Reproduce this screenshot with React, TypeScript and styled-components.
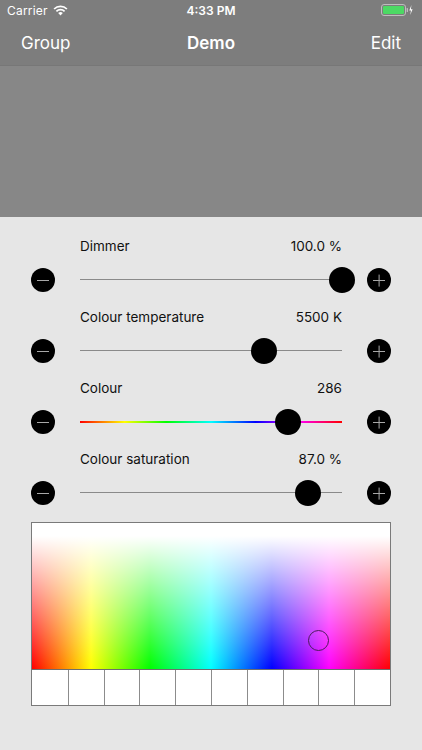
import React from "react";
import styled, { createGlobalStyle } from "styled-components";

const GlobalStyle = createGlobalStyle`
  html, body {
    margin: 0;
    padding: 0;
    background: #e6e6e6;
  }
  body {
    font-family: Inter, "Liberation Sans", Arial, sans-serif;
    -webkit-font-smoothing: antialiased;
  }
`;

const Screen = styled.div`
  width: 422px;
  min-height: 750px;
  display: flex;
  flex-direction: column;
  background: #e6e6e6;
`;

const TopBar = styled.div`
  background: #7d7d7d;
  color: #fff;
  border-bottom: 1px solid #777;
`;

const StatusBar = styled.div`
  height: 20px;
  display: grid;
  grid-template-columns: 1fr auto 1fr;
  align-items: center;
  padding: 0 7px;
  font-size: 12px;
`;

const StatusLeft = styled.div`
  display: flex;
  align-items: center;
  gap: 5px;
  letter-spacing: 0.2px;
`;

const Clock = styled.div`
  font-weight: 600;
`;

const StatusRight = styled.div`
  display: flex;
  justify-content: flex-end;
  align-items: center;
  gap: 2px;
  padding-right: 2px;
`;

const NavBar = styled.div`
  height: 44px;
  display: grid;
  grid-template-columns: 1fr auto 1fr;
  align-items: center;
  padding: 1px 21px 0;
  font-size: 17px;
`;

const NavButton = styled.div<{ $right?: boolean }>`
  text-align: ${(p) => (p.$right ? "right" : "left")};
`;

const NavTitle = styled.div`
  font-weight: 600;
`;

const Preview = styled.div`
  height: 151px;
  background: #878787;
`;

const Panel = styled.div`
  flex: 1;
  padding-top: 19px;
  display: flex;
  flex-direction: column;
`;

const Block = styled.div`
  display: flex;
  flex-direction: column;
  height: 71px;
`;

const LabelRow = styled.div`
  height: 20px;
  margin: 0 80px;
  display: flex;
  justify-content: space-between;
  align-items: center;
  font-size: 13.5px;
  color: #111;
`;

const ControlRow = styled.div`
  height: 30px;
  margin-top: 9px;
  padding-left: 31px;
  display: grid;
  grid-template-columns: 24px 262px 24px;
  column-gap: 25px;
  align-items: center;
`;

const RoundButton = styled.div`
  width: 24px;
  height: 24px;
  border-radius: 50%;
  background: #000;
  position: relative;
  &::before,
  &::after {
    content: "";
    position: absolute;
    background: #a8a8a8;
    left: 6px;
    top: 11.5px;
    width: 12px;
    height: 1.2px;
  }
  &::after {
    display: ${(p: { $plus?: boolean }) => (p.$plus ? "block" : "none")};
    transform: rotate(90deg);
  }
`;

const Track = styled.div<{ $rainbow?: boolean }>`
  position: relative;
  height: 30px;
  &::before {
    content: "";
    position: absolute;
    left: 0;
    right: 0;
    top: 14px;
    height: ${(p) => (p.$rainbow ? "1.5px" : "1.2px")};
    background: ${(p) =>
      p.$rainbow
        ? "linear-gradient(to right, #f00, #ff0 17%, #0f0 33%, #0ff 50%, #00f 67%, #f0f 83%, #f00)"
        : "#8a8a8a"};
  }
`;

const Thumb = styled.div`
  position: absolute;
  top: 2px;
  width: 26px;
  height: 26px;
  margin-left: -13px;
  border-radius: 50%;
  background: #000;
`;

const Picker = styled.div`
  margin: 2px 31px 0;
  width: 358px;
  border: 1px solid #7a7a7a;
  display: flex;
  flex-direction: column;
`;

const Spectrum = styled.div`
  position: relative;
  height: 146px;
  background: linear-gradient(to bottom, #fff 9%, rgba(255, 255, 255, 0) 100%),
    linear-gradient(
      to right,
      #f00,
      #ff0 16.5%,
      #0f0 33%,
      #0ff 50%,
      #00f 67%,
      #f0f 83%,
      #f00
    );
  border-bottom: 1px solid #6e6e6e;
`;

const Marker = styled.div`
  position: absolute;
  width: 19px;
  height: 19px;
  margin: -10px 0 0 -10px;
  border-radius: 50%;
  border: 1px solid #4b1b5c;
`;

const Swatches = styled.div`
  height: 35px;
  display: grid;
  grid-template-columns: repeat(10, 1fr);
`;

const Swatch = styled.div`
  background: #fff;
  & + & {
    border-left: 1.5px solid #8c8c8c;
  }
`;

const Wifi = () => (
  <svg width="15" height="11" viewBox="0 0 15 11">
    <path d="M7.5 10.5 L5.2 8.1 A3.3 3.3 0 0 1 9.8 8.1 Z" fill="#fff" />
    <path d="M3.4 6.3 A5.8 5.8 0 0 1 11.6 6.3" stroke="#fff" strokeWidth="1.7" fill="none" />
    <path d="M1.1 4 A9 9 0 0 1 13.9 4" stroke="#fff" strokeWidth="1.7" fill="none" />
  </svg>
);

const Battery = () => (
  <svg width="32" height="12" viewBox="0 0 32 12">
    <rect x="0.5" y="0.5" width="24" height="11" rx="2.5" fill="none" stroke="#bdbdbd" />
    <rect x="2" y="2" width="21" height="8" rx="1.3" fill="#4cd964" />
    <rect x="25.6" y="4" width="1.4" height="4" rx="0.6" fill="#bdbdbd" />
    <path d="M30.4 1 L28.3 6.4 H30 L29.2 11 L31.6 5.2 H29.9 Z" fill="#fff" />
  </svg>
);

type SliderProps = {
  label: string;
  value: string;
  pos: number;
  rainbow?: boolean;
};

function SliderBlock({ label, value, pos, rainbow }: SliderProps) {
  return (
    <Block>
      <LabelRow>
        <span>{label}</span>
        <span>{value}</span>
      </LabelRow>
      <ControlRow>
        <RoundButton />
        <Track $rainbow={rainbow}>
          <Thumb style={{ left: pos }} />
        </Track>
        <RoundButton $plus />
      </ControlRow>
    </Block>
  );
}

const sliders: SliderProps[] = [
  { label: "Dimmer", value: "100.0 %", pos: 262 },
  { label: "Colour temperature", value: "5500 K", pos: 184 },
  { label: "Colour", value: "286", pos: 208, rainbow: true },
  { label: "Colour saturation", value: "87.0 %", pos: 228 },
];

export default function App() {
  return (
    <Screen>
      <GlobalStyle />
      <TopBar>
        <StatusBar>
          <StatusLeft>
            <span>Carrier</span>
            <Wifi />
          </StatusLeft>
          <Clock>4:33 PM</Clock>
          <StatusRight>
            <Battery />
          </StatusRight>
        </StatusBar>
        <NavBar>
          <NavButton>Group</NavButton>
          <NavTitle>Demo</NavTitle>
          <NavButton $right>Edit</NavButton>
        </NavBar>
      </TopBar>
      <Preview />
      <Panel>
        {sliders.map((s) => (
          <SliderBlock key={s.label} {...s} />
        ))}
        <Picker>
          <Spectrum>
            <Marker style={{ left: 286, top: 117 }} />
          </Spectrum>
          <Swatches>
            {Array.from({ length: 10 }).map((_, i) => (
              <Swatch key={i} />
            ))}
          </Swatches>
        </Picker>
      </Panel>
    </Screen>
  );
}
